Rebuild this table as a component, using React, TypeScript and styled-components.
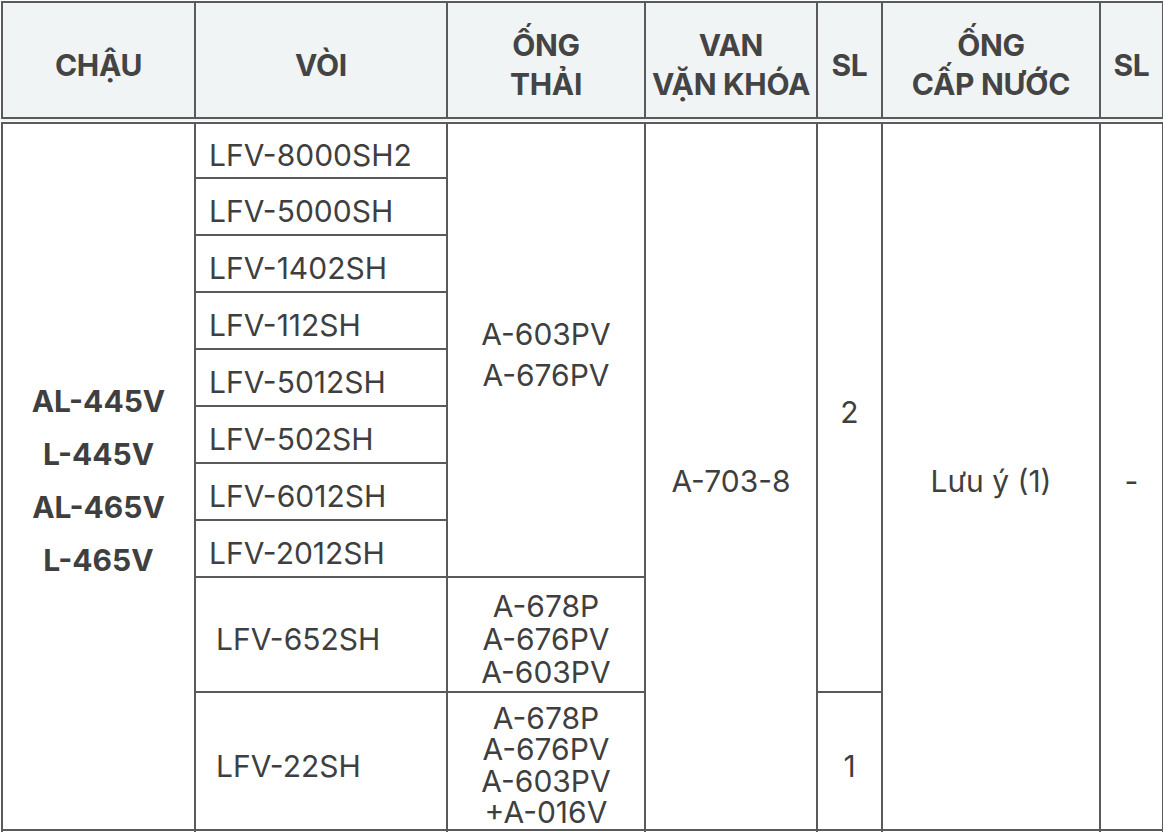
import React from 'react';
import styled, { createGlobalStyle } from 'styled-components';

const GlobalStyle = createGlobalStyle`
  html, body {
    margin: 0;
    padding: 0;
    background: #ffffff;
  }
  body {
    font-family: Inter, Roboto, "Noto Sans", sans-serif;
    color: #3f3f3f;
  }
`;

const Wrapper = styled.div`
  padding: 1px 0 0 1px;
`;

const Table = styled.table`
  width: 1161px;
  table-layout: fixed;
  border-collapse: collapse;
  font-size: 30px;
`;

const HeadCell = styled.th`
  background: #f1f4f5;
  border: 2px solid #5a5a5a;
  border-bottom: 7px double #5a5a5a;
  height: 104px;
  padding: 10px 4px 0;
  font-weight: 700;
  font-size: 30px;
  line-height: 39px;
  letter-spacing: -0.3px;
  text-align: center;
  vertical-align: middle;
  color: #444444;
`;

const Row = styled.tr<{ $h: number }>`
  height: ${(p) => p.$h}px;
`;

const Cell = styled.td<{ $align?: 'left' | 'center'; $indent?: number; $lh?: number; $bold?: boolean }>`
  border: 2px solid #5a5a5a;
  padding: 10px 4px 0 ${(p) => (p.$indent !== undefined ? p.$indent : 4)}px;
  text-align: ${(p) => p.$align || 'center'};
  vertical-align: middle;
  line-height: ${(p) => p.$lh || 36}px;
  font-weight: ${(p) => (p.$bold ? 700 : 400)};
  white-space: nowrap;
`;

const Lines: React.FC<{ items: string[] }> = ({ items }) => (
  <>
    {items.map((t, i) => (
      <React.Fragment key={t + i}>
        {i > 0 && <br />}
        {t}
      </React.Fragment>
    ))}
  </>
);

const widths = [193, 252, 198, 172, 65, 218, 63];

const voiList = [
  'LFV-8000SH2',
  'LFV-5000SH',
  'LFV-1402SH',
  'LFV-112SH',
  'LFV-5012SH',
  'LFV-502SH',
  'LFV-6012SH',
  'LFV-2012SH',
];

const App: React.FC = () => {
  return (
    <Wrapper>
      <GlobalStyle />
      <Table>
        <colgroup>
          {widths.map((w, i) => (
            <col key={i} style={{ width: w }} />
          ))}
        </colgroup>
        <thead>
          <tr>
            <HeadCell>CHẬU</HeadCell>
            <HeadCell>VÒI</HeadCell>
            <HeadCell>
              <Lines items={['ỐNG', 'THẢI']} />
            </HeadCell>
            <HeadCell>
              <Lines items={['VAN', 'VẶN KHÓA']} />
            </HeadCell>
            <HeadCell>SL</HeadCell>
            <HeadCell>
              <Lines items={['ỐNG', 'CẤP NƯỚC']} />
            </HeadCell>
            <HeadCell>SL</HeadCell>
          </tr>
        </thead>
        <tbody>
          {voiList.map((voi, i) => (
            <Row key={voi} $h={57}>
              {i === 0 && (
                <>
                  <Cell rowSpan={10} $bold $lh={53}>
                    <Lines items={['AL-445V', 'L-445V', 'AL-465V', 'L-465V']} />
                  </Cell>
                </>
              )}
              <Cell $align="left" $indent={13}>
                {voi}
              </Cell>
              {i === 0 && (
                <>
                  <Cell rowSpan={8} $lh={41}>
                    <Lines items={['A-603PV', 'A-676PV']} />
                  </Cell>
                  <Cell rowSpan={10}>A-703-8</Cell>
                  <Cell rowSpan={9}>2</Cell>
                  <Cell rowSpan={10}>Lưu ý (1)</Cell>
                  <Cell rowSpan={10}>-</Cell>
                </>
              )}
            </Row>
          ))}
          <Row $h={115}>
            <Cell $align="left" $indent={20}>
              LFV-652SH
            </Cell>
            <Cell $lh={33}>
              <Lines items={['A-678P', 'A-676PV', 'A-603PV']} />
            </Cell>
          </Row>
          <Row $h={138}>
            <Cell $align="left" $indent={20}>
              LFV-22SH
            </Cell>
            <Cell $lh={31.5}>
              <Lines items={['A-678P', 'A-676PV', 'A-603PV', '+A-016V']} />
            </Cell>
            <Cell>1</Cell>
          </Row>
          <Row $h={60}>
            <Cell />
            <Cell />
            <Cell />
            <Cell />
            <Cell />
            <Cell />
            <Cell />
          </Row>
        </tbody>
      </Table>
    </Wrapper>
  );
};

export default App;
